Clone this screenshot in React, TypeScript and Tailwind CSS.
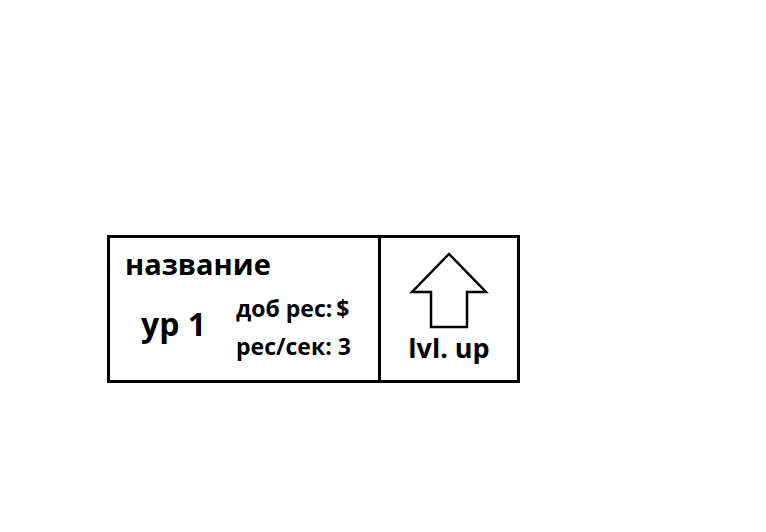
import React from "react";

export default function App() {
  return (
    <div className="w-[766px] h-[532px] bg-white pt-[235px] pl-[107px]" style={{ fontFamily: '"Open Sans", "Liberation Sans", sans-serif' }}>
      <div className="flex w-[413px] h-[148px] border-[3px] border-black">
        <div className="w-[271px] border-r-[3px] border-black pl-[15px] pt-[8px]">
          <div className="text-[29px] font-bold leading-[36px] text-black whitespace-nowrap">название</div>
          <div className="flex items-start mt-[14px]">
            <div className="w-[111px] pl-[16px] mt-[12px] text-[32px] font-bold leading-[32px] whitespace-nowrap">ур 1</div>
            <div className="flex flex-col gap-[14px] text-[23px] font-bold leading-[24px] whitespace-nowrap">
              <div>
                доб рес:<span className="ml-[4px]">$</span>
              </div>
              <div>рес/сек: 3</div>
            </div>
          </div>
        </div>
        <div className="flex-1 flex flex-col items-center pt-[14px]">
          <svg width="80" height="78" viewBox="0 0 80 78">
            <polygon points="40,2 3,40 22,40 22,75 58,75 58,40 77,40" fill="white" stroke="black" strokeWidth="2.5" />
          </svg>
          <div className="text-[27px] font-bold leading-[27px] mt-[4px] whitespace-nowrap">lvl. up</div>
        </div>
      </div>
    </div>
  );
}
